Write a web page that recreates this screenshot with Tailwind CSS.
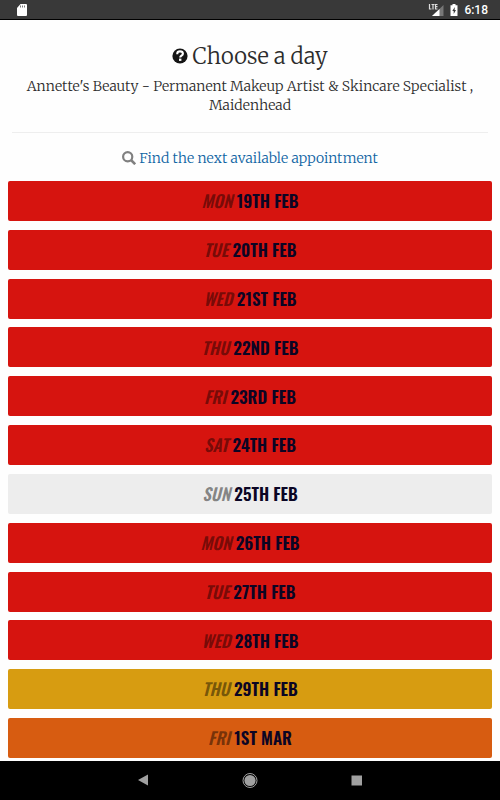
<!DOCTYPE html>
<html lang="en">
  <head>
    <meta charset="UTF-8">
    <meta name="viewport" content="width=device-width, initial-scale=1.0">
    <title>Choose a day</title>
    <script src="https://cdn.jsdelivr.net/npm/@tailwindcss/browser@4"></script>
  </head>
  <body class="flex min-h-screen flex-col bg-[#fefefe] font-['Merriweather','Liberation_Serif',serif] font-light text-[#2c2c2c]">
    <!-- Status Bar -->
    <div class="flex h-5 items-center border-b border-black bg-[#393939] px-4 text-white">
      <svg class="h-3 w-3" viewBox="0 0 12 12" aria-hidden="true">
        <path d="M4.500 0H10a1 1 0 0 1 1 1v10a1 1 0 0 1-1 1H2a1 1 0 0 1-1-1V4z" fill="#fff" />
        <path d="M4.500 1.500v2M6.500 1.500v2M8.500 1.500v2" stroke="#777" />
      </svg>
      <div class="ml-auto -mr-1 flex items-center gap-1.5">
        <svg class="h-3 w-4" viewBox="0 0 16 12" aria-hidden="true">
          <path d="M15.500 1v11H4z" fill="#777" />
          <path d="M11.500 5v7H4z" fill="#fff" />
          <path d="M1.500 0v5H3.500M3.500 .5H6.500M5 .5V5.500M9.500 .5H7.500V5H9.500M7.500 2.700H9.500" fill="none" stroke="#ddd" stroke-width="1.200" />
        </svg>
        <svg class="h-3 w-2" viewBox="0 0 8 12" aria-hidden="true">
          <path d="M2.500 0h3v1.200H7.500V12H.5V1.200h2z" fill="#fff" />
          <path d="M4.800 3L2.300 7h1.400v3L6 6H4.600z" fill="#393939" />
        </svg>
        <span class="font-[Roboto,sans-serif] text-[12px] font-medium">6:18</span>
      </div>
    </div>

    <!-- Main Content -->
    <main class="flex flex-1 flex-col px-2 pb-[3px]">
      <header class="mx-1 border-b border-[#eee] pt-5 pb-[17px] text-center">
        <h1 class="flex items-center justify-center gap-1 text-[22px] leading-8">
          <svg class="h-4 w-4" viewBox="0 0 16 16" aria-hidden="true">
            <circle cx="8" cy="8" r="7.600" fill="#151515" />
            <path d="M5.300 6.300V5.500C5.300 4 6.400 3.400 8 3.400s2.900.8 2.900 2.300c0 2-2.700 1.900-2.700 3.700" fill="none" stroke="#fff" stroke-width="2.100" />
            <path d="M7 10.600h2.400v2.300H7z" fill="#fff" />
          </svg>
          Choose a day
        </h1>
        <p class="mt-[5px] text-[14px] leading-[19px]">Annette's Beauty - Permanent Makeup Artist &amp; Skincare Specialist , Maidenhead</p>
      </header>

      <a href="#" class="mt-[13px] mb-[11px] flex items-center justify-center gap-[3px] text-[14px] leading-6 text-[#0f64a3]">
        <svg class="h-3.5 w-3.5" viewBox="0 0 14 14" fill="none" stroke="#808080" aria-hidden="true">
          <circle cx="5.700" cy="5.700" r="4.600" stroke-width="2.200" />
          <path d="M9 9l4.200 4.200" stroke-width="2.600" />
        </svg>
        Find the next available appointment
      </a>

      <!-- Days -->
      <div class="flex flex-1 flex-col justify-between font-['Oswald','Liberation_Sans_Narrow','Roboto_Condensed',sans-serif] text-[17px] font-semibold text-[#0b0524]">
        <button class="h-10 rounded-xs bg-[#d6140f]"><i class="text-black/45">MON</i> 19TH FEB</button>
        <button class="h-10 rounded-xs bg-[#d6140f]"><i class="text-black/45">TUE</i> 20TH FEB</button>
        <button class="h-10 rounded-xs bg-[#d6140f]"><i class="text-black/45">WED</i> 21ST FEB</button>
        <button class="h-10 rounded-xs bg-[#d6140f]"><i class="text-black/45">THU</i> 22ND FEB</button>
        <button class="h-10 rounded-xs bg-[#d6140f]"><i class="text-black/45">FRI</i> 23RD FEB</button>
        <button class="h-10 rounded-xs bg-[#d6140f]"><i class="text-black/45">SAT</i> 24TH FEB</button>
        <button class="h-10 rounded-xs bg-[#ededed]"><i class="text-black/45">SUN</i> 25TH FEB</button>
        <button class="h-10 rounded-xs bg-[#d6140f]"><i class="text-black/45">MON</i> 26TH FEB</button>
        <button class="h-10 rounded-xs bg-[#d6140f]"><i class="text-black/45">TUE</i> 27TH FEB</button>
        <button class="h-10 rounded-xs bg-[#d6140f]"><i class="text-black/45">WED</i> 28TH FEB</button>
        <button class="h-10 rounded-xs bg-[#d79c11]"><i class="text-black/45">THU</i> 29TH FEB</button>
        <button class="h-10 rounded-xs bg-[#d75c11]"><i class="text-black/45">FRI</i> 1ST MAR</button>
      </div>
    </main>

    <!-- Navigation Bar -->
    <nav class="flex h-[39px] items-center justify-center gap-[91px] bg-black">
      <button aria-label="Back">
        <svg class="h-4 w-4" viewBox="0 0 16 16"><path d="M13 1.500v11L3 7z" fill="#a0a0a0" /></svg>
      </button>
      <button aria-label="Home">
        <svg class="h-4 w-4" viewBox="0 0 16 16">
          <circle cx="8" cy="7.500" r="7" fill="none" stroke="#a0a0a0" />
          <circle cx="8" cy="7.500" r="5.600" fill="#a0a0a0" />
        </svg>
      </button>
      <button aria-label="Recent apps">
        <svg class="h-4 w-4" viewBox="0 0 16 16"><path d="M2.500 2.500h10.500v10H2.500z" fill="#a0a0a0" /></svg>
      </button>
    </nav>
  </body>
</html>
